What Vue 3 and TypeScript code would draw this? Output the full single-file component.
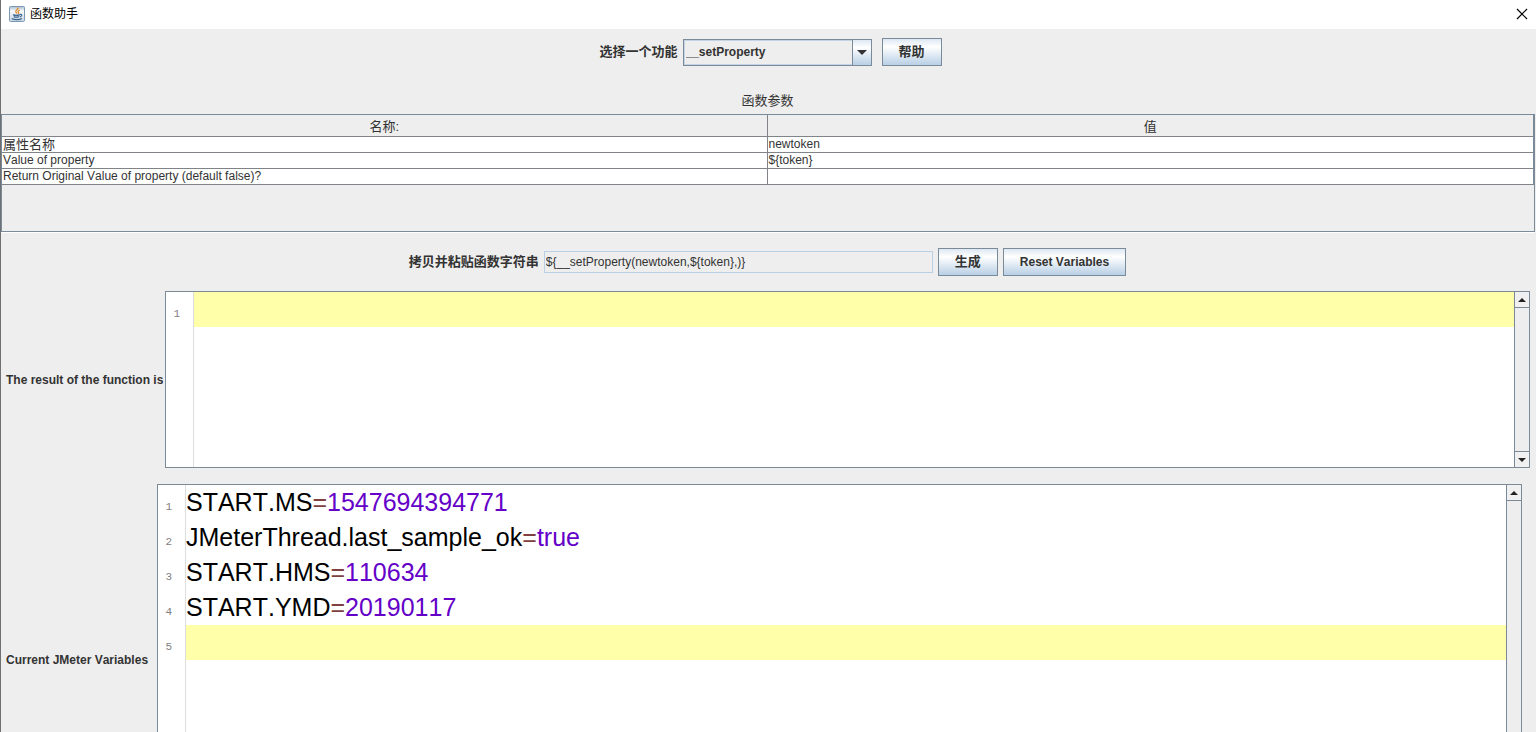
<script setup lang="ts">
import { ref } from 'vue'

interface Parameter {
  name: string
  value: string
}

interface Variable {
  key: string
  value: string
}

const functions = ['__setProperty', '__property', '__P', '__time']
const selected = ref('__setProperty')
const expression = ref('${__setProperty(newtoken,${token},)}')
const result = ref('')

const parameters: Parameter[] = [
  { name: '属性名称', value: 'newtoken' },
  { name: 'Value of property', value: '${token}' },
  { name: 'Return Original Value of property (default false)?', value: '' },
]

const variables = ref<Variable[]>([
  { key: 'START.MS', value: '1547694394771' },
  { key: 'JMeterThread.last_sample_ok', value: 'true' },
  { key: 'START.HMS', value: '110634' },
  { key: 'START.YMD', value: '20190117' },
])

function generate() {
  const args = parameters.map((p) => p.value).join(',')
  expression.value = '${' + selected.value + '(' + args + ')}'
}

function resetVariables() {
  variables.value = []
}
</script>

<template>
  <div class="window">
    <header class="titlebar">
      <svg class="app-icon" viewBox="0 0 16 16" aria-hidden="true">
        <defs>
          <linearGradient id="tile" x1="0" y1="0" x2="0" y2="1">
            <stop offset="0" stop-color="#a9bfd3" />
            <stop offset="0.3" stop-color="#f7f9fb" />
            <stop offset="1" stop-color="#c3d4e4" />
          </linearGradient>
        </defs>
        <rect x="0.5" y="0.5" width="15" height="15" rx="1" fill="url(#tile)" stroke="#7d98b3" />
        <path d="M9 1.500c1 1.800-3 2.700-2.200 4.500.3.600.9.900 1 1.600M10.800 4c-1.900.9-2.200 1.600-1.300 2.500.4.500.1 1-.4 1.300" fill="none" stroke="#e08a2c" stroke-width="1.300" />
        <path d="M4 8.600c1.600.8 5.200.7 6.800 0M4.800 10.600c1.400.7 3.800.6 5.200 0M11 8.500c2.400-.5 2.200 1.700-.2 2.300M2.800 12.500c2 1.500 8.200 1.400 10 0" fill="none" stroke="#3f6690" stroke-width="1.200" />
      </svg>
      <h1 class="title">函数助手</h1>
      <button class="close" type="button" aria-label="关闭">
        <svg viewBox="0 0 12 12" aria-hidden="true">
          <path d="M1 1l10 10M11 1L1 11" fill="none" stroke="#000" stroke-width="1.2" />
        </svg>
      </button>
    </header>

    <main class="content">
      <div class="row chooser">
        <label class="cjk" for="function">选择一个功能</label>
        <div class="combo">
          <select id="function" v-model="selected">
            <option v-for="f in functions" :key="f" :value="f">{{ f }}</option>
          </select>
          <span class="combo-arrow">
            <svg viewBox="0 0 10 5" aria-hidden="true"><path d="M0 0h10l-5 5z" fill="#333" /></svg>
          </span>
        </div>
        <button class="btn cjk help" type="button">帮助</button>
      </div>

      <h2 class="caption">函数参数</h2>
      <div class="table-pane">
        <table>
          <thead>
            <tr>
              <th scope="col">名称:</th>
              <th scope="col">值</th>
            </tr>
          </thead>
          <tbody>
            <tr v-for="(p, i) in parameters" :key="p.name">
              <td :class="{ cjk: i === 0 }">{{ p.name }}</td>
              <td>{{ p.value }}</td>
            </tr>
          </tbody>
        </table>
      </div>

      <div class="row generator">
        <label class="cjk" for="expression">拷贝并粘贴函数字符串</label>
        <input id="expression" v-model="expression" class="field" type="text" readonly />
        <button class="btn cjk" type="button" @click="generate">生成</button>
        <button class="btn" type="button" @click="resetVariables">Reset Variables</button>
      </div>

      <section class="pane result">
        <label class="pane-label" for="result">The result of the function is</label>
        <div class="editor">
          <div class="gutter"><span>1</span></div>
          <textarea id="result" v-model="result" class="code result-text" spellcheck="false"></textarea>
          <div class="scrollbar">
            <button type="button" aria-label="向上滚动">
              <svg viewBox="0 0 8 4" aria-hidden="true"><path d="M0 4h8l-4-4z" fill="#222" /></svg>
            </button>
            <button type="button" aria-label="向下滚动">
              <svg viewBox="0 0 8 4" aria-hidden="true"><path d="M0 0h8l-4 4z" fill="#222" /></svg>
            </button>
          </div>
        </div>
      </section>

      <section class="pane variables">
        <span id="variables-label" class="pane-label">Current JMeter Variables</span>
        <div class="editor">
          <div class="gutter">
            <span v-for="n in variables.length + 1" :key="n">{{ n }}</span>
          </div>
          <div class="code" role="textbox" aria-multiline="true" aria-labelledby="variables-label" tabindex="0">
            <div v-for="v in variables" :key="v.key" class="line">{{ v.key }}<span class="operator">=</span><span class="value">{{ v.value }}</span></div>
            <div class="line current"></div>
          </div>
          <div class="scrollbar">
            <button type="button" aria-label="向上滚动">
              <svg viewBox="0 0 8 4" aria-hidden="true"><path d="M0 4h8l-4-4z" fill="#222" /></svg>
            </button>
            <button type="button" aria-label="向下滚动">
              <svg viewBox="0 0 8 4" aria-hidden="true"><path d="M0 0h8l-4 4z" fill="#222" /></svg>
            </button>
          </div>
        </div>
      </section>
    </main>
  </div>
</template>

<style>
body {
  margin: 0;
  background: #eee;
}
</style>

<style scoped>
.window,
.window * {
  box-sizing: border-box;
}

.window {
  display: flex;
  flex-direction: column;
  height: 100vh;
  overflow: hidden;
  border-left: 1px solid #6f7072;
  background: #eee;
  color: #333;
  font: 12px/16px "Liberation Sans", "Noto Sans CJK SC", sans-serif;
  font-kerning: none;
}

button,
select,
input,
textarea {
  margin: 0;
  border-radius: 0;
  color: inherit;
  font: inherit;
  font-kerning: none;
}

.titlebar {
  display: flex;
  flex: none;
  align-items: center;
  height: 29px;
  padding: 0 8px 2px;
  background: #fff;
}

.app-icon {
  width: 16px;
  height: 16px;
}

.title {
  flex: 1;
  margin: 0 0 0 5px;
  color: #000;
  font-size: 12px;
  font-weight: 400;
}

.close {
  display: flex;
  padding: 0;
  border: 0;
  background: none;
}

.close svg {
  width: 12px;
  height: 12px;
}

.content {
  flex: 1;
  min-height: 0;
}

.row {
  display: flex;
  align-items: center;
  justify-content: center;
  gap: 5px;
  font-weight: 700;
}

.cjk {
  font-size: 13px;
}

.chooser {
  padding: 9px 0 0 4px;
}

.combo {
  position: relative;
  width: 189px;
  height: 27px;
}

.combo select {
  width: 100%;
  height: 100%;
  padding: 0 20px 0 2px;
  border: 1px solid #7a8a99;
  outline: 1px solid #c4d4e4;
  outline-offset: -2px;
  background: #eee;
  font-weight: 700;
  appearance: none;
}

.combo-arrow {
  position: absolute;
  top: 1px;
  right: 1px;
  bottom: 1px;
  display: flex;
  align-items: center;
  justify-content: center;
  width: 19px;
  border-left: 1px solid #7a8a99;
  background: linear-gradient(#dde8f3, #fff 30%, #b8cfe5);
  pointer-events: none;
}

.combo-arrow svg {
  width: 10px;
  height: 5px;
}

.btn {
  height: 28px;
  padding: 0 16px;
  border: 1px solid #7a8a99;
  background: linear-gradient(#dde8f3, #fff 30%, #b8cfe5);
  font-weight: 700;
}

.help {
  margin-left: 5px;
}

.caption {
  margin: 26px 2px 5px 0;
  font-size: 13px;
  font-weight: 400;
  line-height: 17px;
  text-align: center;
}

.table-pane {
  height: 118px;
  margin-right: 1px;
  border: 1px solid #7a8a99;
  box-shadow: 0 1px #fff;
}

table {
  width: 100%;
  border-right: 1px solid #7a8a99;
  border-spacing: 0;
  table-layout: fixed;
}

th,
td {
  height: 16px;
  padding: 0 1px;
  overflow: hidden;
  border-bottom: 1px solid #808489;
  line-height: 15px;
  white-space: nowrap;
}

th:first-child,
td:first-child {
  border-right: 1px solid #808489;
}

th {
  height: 22px;
  padding-top: 2px;
  font-size: 13px;
  font-weight: 400;
}

td {
  background: #fff;
}

.generator {
  padding: 16px 2px 15px 0;
}

.field {
  width: 389px;
  height: 22px;
  padding: 0 1px;
  border: 1px solid #b8cfe5;
  outline: 0;
  background: #eee;
  font-weight: 400;
}

.pane {
  display: flex;
  align-items: center;
  padding-left: 5px;
}

.result {
  padding-right: 6px;
}

.variables {
  margin-top: 16px;
  padding-right: 14px;
}

.pane-label {
  flex: none;
  font-weight: 700;
  white-space: nowrap;
}

.result .pane-label {
  width: 159px;
}

.variables .pane-label {
  width: 151px;
}

.editor {
  display: flex;
  flex: 1;
  min-width: 0;
  border: 1px solid #7a8a99;
  background: #fff;
}

.result .editor {
  height: 177px;
}

.variables .editor {
  height: 352px;
}

.gutter {
  flex: none;
  width: 28px;
  border-right: 1px solid #ddd;
  color: #808080;
  font: 11px/35px "Liberation Mono", monospace;
}

.gutter span {
  display: block;
  height: 35px;
  padding: 5px 13px 0 0;
  line-height: 35px;
  text-align: right;
}

.code {
  flex: 1;
  min-width: 0;
  color: #000;
  font-size: 25px;
  line-height: 35px;
  white-space: pre;
}

.result-text {
  padding: 0;
  border: 0;
  outline: 0;
  background: linear-gradient(#ffffaa, #ffffaa) 0 0 / 100% 35px no-repeat;
  resize: none;
}

.line {
  height: 35px;
}

.current {
  background: #ffffaa;
}

.operator {
  color: #804040;
}

.value {
  color: #6400c8;
}

.scrollbar {
  display: flex;
  flex: none;
  flex-direction: column;
  justify-content: space-between;
  width: 15px;
  border-left: 1px solid #7a8a99;
  background: #eee;
}

.scrollbar button {
  display: flex;
  align-items: center;
  justify-content: center;
  height: 16px;
  padding: 0;
  border: 0;
  border-bottom: 1px solid #7a8a99;
  background: #f0f0f0;
}

.scrollbar button + button {
  border-top: 1px solid #7a8a99;
  border-bottom: 0;
}

.scrollbar svg {
  width: 8px;
  height: 4px;
}
</style>
